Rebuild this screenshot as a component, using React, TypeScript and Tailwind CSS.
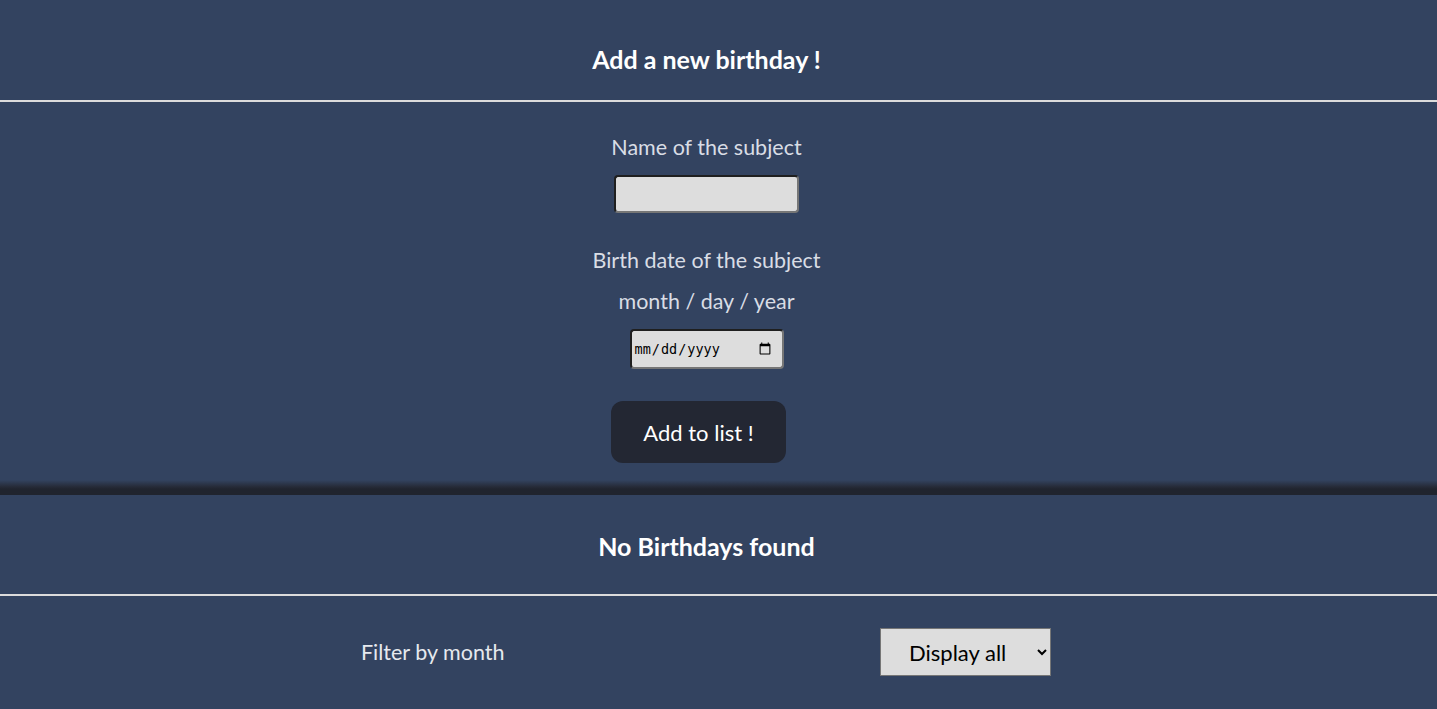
import React from 'react';

export default function App() {
  const font = { fontFamily: 'Lato, "Noto Sans", sans-serif' };

  return (
    <div className="min-h-screen w-full bg-[#334360] text-[#d9dde5]" style={font}>
      {/* add form */}
      <div className="flex h-[102px] items-end justify-center pr-[24px] pb-[27px] border-b-2 border-[#dcdcdc]">
        <h2 className="text-[25px] font-bold leading-[28px] text-white">Add a new birthday !</h2>
      </div>

      <form className="flex flex-col items-center pr-[24px] pt-[33px]">
        <label htmlFor="name" className="text-[21.5px] leading-[24px]">
          Name of the subject
        </label>
        <input
          id="name"
          type="text"
          className="mt-[16px] h-[38px] w-[185px] rounded-[4px] border-2 border-t-[#1f1f1f] border-l-[#1f1f1f] border-b-[#767676] border-r-[#767676] bg-[#dddddd] px-2 text-black outline-none"
        />

        <label htmlFor="date" className="mt-[35px] text-[21.5px] leading-[24px]">
          Birth date of the subject
        </label>
        <p className="mt-[17px] text-[21.5px] leading-[24px]">month / day / year</p>
        <input
          id="date"
          type="date"
          className="mt-[16px] h-[40px] w-[154px] rounded-[4px] border-2 border-t-[#1f1f1f] border-l-[#1f1f1f] border-b-[#767676] border-r-[#767676] bg-[#dddddd] pl-[2px] pr-[8px] text-[13.5px] text-black outline-none"
          style={{ fontFamily: '"DejaVu Sans Mono", monospace' }}
        />

        <button
          type="button"
          className="mt-[32px] mr-[16px] h-[62px] w-[175px] rounded-[12px] bg-[#232733] text-[22px] text-white"
        >
          Add to list !
        </button>
      </form>

      <div className="mt-[17px] h-[15px] bg-[linear-gradient(to_bottom,#334360_0%,#262b38_45%,#20242e_60%,#20242e_100%)]" />

      {/* list */}
      <div className="flex h-[101px] items-end justify-center pr-[24px] pb-[34px] border-b-2 border-[#dcdcdc]">
        <h2 className="text-[25px] font-bold leading-[28px] text-white">No Birthdays found</h2>
      </div>

      <div className="flex items-center pl-[361px] pt-[32px] pb-[32px]">
        <label htmlFor="month" className="w-[519px] text-[21.5px] leading-[24px] text-[#e6e9ee]">
          Filter by month
        </label>
        <select
          id="month"
          className="h-[48px] w-[171px] border border-[#767676] bg-[#dddddd] pl-[24px] text-[22px] text-black"
          style={font}
        >
          <option>Display all</option>
        </select>
      </div>
    </div>
  );
}
